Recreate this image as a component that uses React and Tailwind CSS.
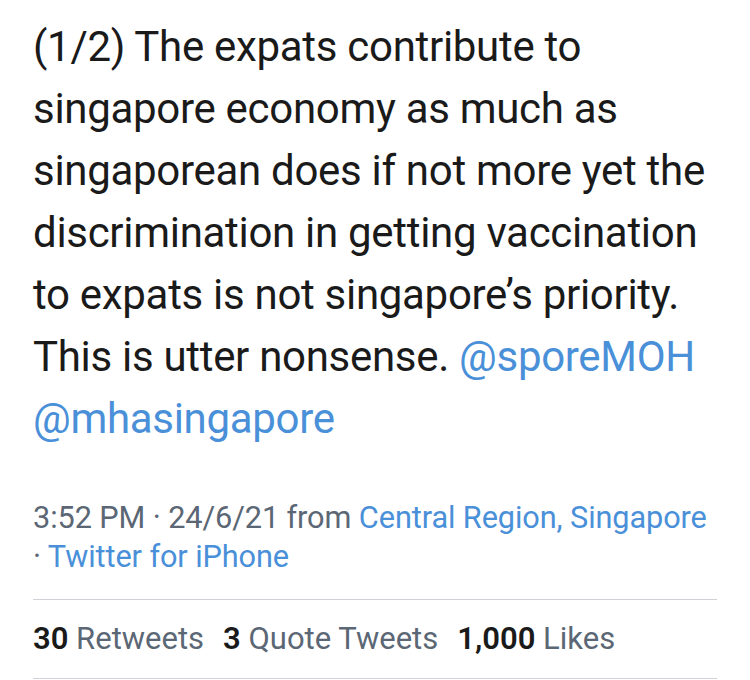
import React from "react";

export default function App() {
  const lines = [
    "(1/2) The expats contribute to",
    "singapore economy as much as",
    "singaporean does if not more yet the",
    "discrimination in getting vaccination",
    "to expats is not singapore’s priority.",
  ];
  return (
    <div className="w-[750px] h-[680px] bg-white overflow-hidden" style={{ fontFamily: "Roboto, 'Liberation Sans', sans-serif" }}>
      <div className="pl-[33px] pr-[33px] pt-[16px]">
        <div className="text-[42px] leading-[62px] text-[#1a1a1a] tracking-[-0.3px] whitespace-nowrap">
          {lines.map((l) => (
            <div key={l}>{l}</div>
          ))}
          <div>
            This is utter nonsense. <span className="text-[#4a90d9]">@sporeMOH</span>
          </div>
          <div className="text-[#4a90d9]">@mhasingapore</div>
        </div>
        <div className="mt-[48px] text-[30.7px] leading-[39px] text-[#5b6775] whitespace-nowrap tracking-[-0.1px]">
          <div>
            3:52 PM · 24/6/21 from <span className="text-[#4a90d9]">Central Region, Singapore</span>
          </div>
          <div>
            · <span className="text-[#4a90d9]">Twitter for iPhone</span>
          </div>
        </div>
        <div className="mt-[23px] border-t border-[#cfd2d6] w-[684px]" />
        <div className="h-[78px] flex items-center gap-[19px] text-[31px] text-[#5b6775] whitespace-nowrap">
          <span><span className="font-semibold text-[#1a1a1a]">30</span> Retweets</span>
          <span><span className="font-semibold text-[#1a1a1a]">3</span> Quote Tweets</span>
          <span><span className="font-semibold text-[#1a1a1a]">1,000</span> Likes</span>
        </div>
        <div className="border-t border-[#cfd2d6] w-[684px]" />
      </div>
    </div>
  );
}
